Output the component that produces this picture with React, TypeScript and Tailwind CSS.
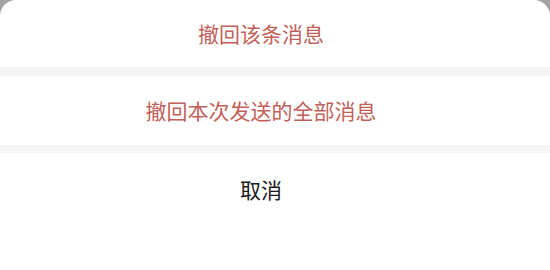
export default function App() {
  const font = { fontFamily: '"Noto Sans CJK SC", "Noto Sans", sans-serif' }
  return (
    <div className="h-[270px] w-[550px] bg-[#a3a3a3]" style={font}>
      <div className="flex h-full flex-col overflow-hidden rounded-t-[16px] bg-white">
        <button className="flex h-[67px] items-center justify-center pr-[28px] text-[21px] text-[#c25f5a]">
          撤回该条消息
        </button>
        <div className="h-[9px] bg-[#f5f5f5]" />
        <button className="flex h-[69px] items-center justify-center pr-[28px] text-[21px] text-[#c25f5a]">
          撤回本次发送的全部消息
        </button>
        <div className="h-[8px] bg-[#f5f5f5]" />
        <button className="flex h-[74px] items-center justify-center pr-[28px] text-[21px] text-[#1a1a1a]">
          取消
        </button>
      </div>
    </div>
  )
}
